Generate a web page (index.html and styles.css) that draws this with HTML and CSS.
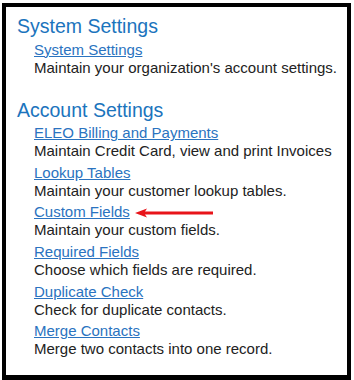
FILE: index.html
```html
<!DOCTYPE html>
<html>
    <head>
        <meta charset="UTF-8"/>
        <title>Settings</title>
        <link rel="stylesheet" href="styles.css">
    </head>

    <body>
        <div class="panel">
            <div class="section">
                <h2 class="section-title">System Settings</h2>
                <ul class="item-list">
                    <li>
                        <a href="#">System Settings</a>
                        <span class="desc">Maintain your organization's account settings.</span>
                    </li>
                </ul>
            </div>

            <div class="section">
                <h2 class="section-title">Account Settings</h2>
                <ul class="item-list">
                    <li>
                        <a href="#">ELEO Billing and Payments</a>
                        <span class="desc">Maintain Credit Card, view and print Invoices</span>
                    </li>
                    <li>
                        <a href="#">Lookup Tables</a>
                        <span class="desc">Maintain your customer lookup tables.</span>
                    </li>
                    <li>
                        <span class="link-line">
                            <a href="#">Custom Fields</a>
                            <svg class="arrow" width="80" height="10" viewBox="0 0 80 10">
                                <path d="M1 5 L13 0.5 L11 3.6 L79 3.6 L79 6.4 L11 6.4 L13 9.5 Z" fill="#e8141a"/>
                            </svg>
                        </span>
                        <span class="desc">Maintain your custom fields.</span>
                    </li>
                    <li>
                        <a href="#">Required Fields</a>
                        <span class="desc">Choose which fields are required.</span>
                    </li>
                    <li>
                        <a href="#">Duplicate Check</a>
                        <span class="desc">Check for duplicate contacts.</span>
                    </li>
                    <li>
                        <a href="#">Merge Contacts</a>
                        <span class="desc">Merge two contacts into one record.</span>
                    </li>
                </ul>
            </div>
        </div>
    </body>
</html>
```

FILE: styles.css
```css
html,body{
    margin:0;
    padding:0;
    background:#fff;
}
body{
    font-family:"Liberation Sans", Arial, sans-serif;
    color:#222;
}
ul,li{
    list-style:none;
    margin:0;
    padding:0;
}

.panel{
    box-sizing:border-box;
    margin:3px 0 0 2px;
    width:349px;
    height:377px;
    border:4px #000 solid;
    border-bottom-width:5px;
    padding:8px 0 0 11px;
}

.section + .section{
    margin-top:22px;
}
.section-title{
    margin:0;
    font-size:19.5px;
    line-height:22px;
    font-weight:normal;
    color:#1b74bd;
}

.item-list{
    padding-left:17px;
}
.item-list li{
    margin-top:3.6px;
    font-size:15px;
    line-height:18px;
}
.item-list a,
.item-list .desc,
.link-line{
    display:block;
}
.item-list a{
    color:#2a73c0;
    text-decoration:underline;
}
.link-line a{
    display:inline;
}
.arrow{
    vertical-align:middle;
}
```
